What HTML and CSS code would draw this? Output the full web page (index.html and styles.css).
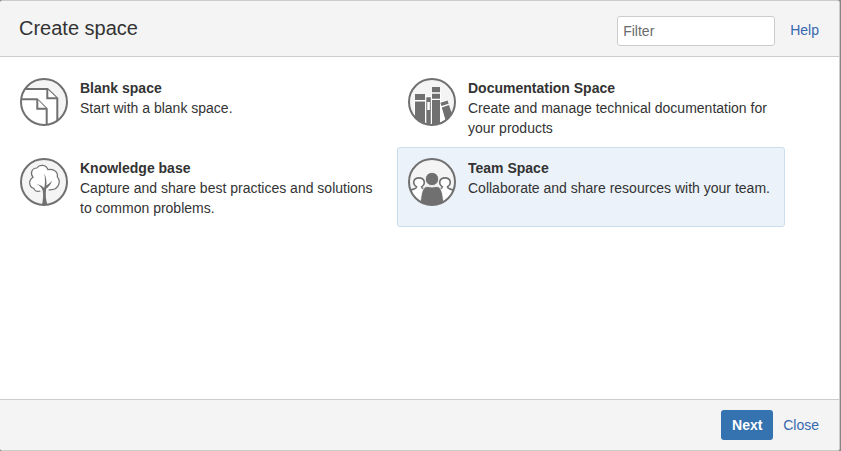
FILE: index.html
```html
<!DOCTYPE html>
<html lang="en">
<head>
<meta charset="utf-8">
<title>Create space</title>
<link rel="stylesheet" href="styles.css">
</head>
<body>
<div class="dialog">
  <header class="dialog-header">
    <h1>Create space</h1>
    <input class="filter" type="text" placeholder="Filter" aria-label="Filter">
    <a class="link" href="#">Help</a>
  </header>
  <main class="templates">
    <div class="template">
      <svg class="icon" viewBox="0 0 48 48">
        <defs><clipPath id="disc"><circle cx="24" cy="24" r="23"/></clipPath></defs>
        <circle class="disc" cx="24" cy="24" r="23"/>
        <g clip-path="url(#disc)" class="line">
          <path d="M0 11H27.5L37.3 20.5V48H0Z"/>
          <path d="M27.3 11V20.3H37"/>
          <path d="M0 21.3H17L26.7 31V49H0Z"/>
          <path d="M17.3 21.3V30.7H26.5"/>
        </g>
        <circle class="ring" cx="24" cy="24" r="23"/>
      </svg>
      <div class="text"><h2>Blank space</h2><p>Start with a blank space.</p></div>
    </div>
    <div class="template">
      <svg class="icon" viewBox="0 0 48 48">
        <circle class="disc" cx="24" cy="24" r="23"/>
        <g clip-path="url(#disc)">
          <path class="white" d="M6 22H18V18H23V14H33V23L39 22L45 39L36 48H6Z"/>
          <path class="solid" d="M7 16h10v6H7zM7 23.5h10V48H7zM24 9h8v5.3h-8zM24 15.7h8v5h-8zM24 22h8v26h-8zM32.4 24.8l7.2-2.3 1 3.2-7.2 2.3zM33.8 29.4l7.2-2.3 5 15-7 5z"/>
          <path class="solid" fill-rule="evenodd" d="M18.3 19.3h4.5V48h-4.5zM19.3 24h2.5v8h-2.5z"/>
        </g>
        <circle class="ring" cx="24" cy="24" r="23"/>
      </svg>
      <div class="text"><h2>Documentation Space</h2><p>Create and manage technical documentation for your products</p></div>
    </div>
    <div class="template">
      <svg class="icon" viewBox="0 0 48 48">
        <circle class="disc" cx="24" cy="24" r="23"/>
        <path class="crown" d="M20 33C17 34 14.5 32.8 13.8 30.3C9.2 29.5 7.8 22.5 13 19.2C9.8 15.5 11.8 10 16.8 10C19.5 6.2 26 6.4 27.8 11.6C34.5 10.2 38.2 14.8 37.3 18.8C41.2 23.5 39 32.5 29 31.8"/>
        <path class="solid" d="M22 47C23 42 23.4 37 22.8 33C22 29.5 19.5 27.7 16.5 26C20 26.8 22.6 28 24.2 30C25.2 26 25.2 20.5 24.4 15.5C26.2 19.5 26.9 24 26.3 27.5C28.2 26.4 30.8 24.5 32 22.5C31.4 26 28.5 29 26.2 30.8C25.4 36 25.7 42 27.5 47Z"/>
        <circle class="ring" cx="24" cy="24" r="23"/>
      </svg>
      <div class="text"><h2>Knowledge base</h2><p>Capture and share best practices and solutions to common problems.</p></div>
    </div>
    <div class="template selected">
      <svg class="icon" viewBox="0 0 48 48">
        <circle class="disc" cx="24" cy="24" r="23"/>
        <g clip-path="url(#disc)">
          <g id="friend">
            <path class="white" d="M0 34C3 31.5 8.5 31.8 8.5 28H13.7C13.7 31.8 17 31 19 32V49H0Z"/>
            <path class="friend" d="M2 32.3C5 31 8.5 31.3 8.5 28.8C4 26 5.2 19.9 11 19.9C16.8 19.9 18 26 13.6 28.8C13.6 30.2 14.5 30.6 16 31"/>
          </g>
          <use href="#friend" transform="matrix(-1 0 0 1 48 0)"/>
          <path class="body" d="M12.2 49C12.6 39 13.5 31 17.5 28.8C19.5 28 21.5 29 24 29C26.5 29 28.5 28 30.5 28.8C34.5 31 35.4 39 35.8 49Z"/>
          <circle class="head" cx="24" cy="21" r="6.6"/>
        </g>
        <circle class="ring" cx="24" cy="24" r="23"/>
      </svg>
      <div class="text"><h2>Team Space</h2><p>Collaborate and share resources with your team.</p></div>
    </div>
  </main>
  <footer class="dialog-footer">
    <button class="next" type="button">Next</button>
    <a class="link" href="#">Close</a>
  </footer>
</div>
</body>
</html>
```
FILE: styles.css
```css
* { box-sizing: border-box; }
body {
  margin: 0;
  background: #858585;
  color: #333;
  font: 14px/20px "Liberation Sans", Arial, sans-serif;
}
.dialog {
  display: flex;
  flex-direction: column;
  width: 840px;
  height: 451px;
  border: 1px solid #ccc;
  border-left: 0;
  border-radius: 3px;
  background: #fff;
  overflow: hidden;
}
.dialog-header {
  display: flex;
  align-items: center;
  height: 56px;
  padding: 4px 20px 0 19px;
  border-bottom: 1px solid #ccc;
  background: #f4f4f4;
}
h1 { flex: 1; margin: 0 0 6px; font-size: 20px; line-height: 28px; font-weight: 400; }
.filter {
  width: 158px;
  height: 30px;
  margin-right: 15px;
  padding: 0 5px;
  border: 1px solid #ccc;
  border-radius: 3px;
  background: #fff;
  font: inherit;
}
.filter::placeholder { color: #6b6b6b; opacity: 1; }
.link { color: #3668b0; text-decoration: none; }
.dialog-header .link { margin-bottom: 1px; }
.templates {
  flex: 1;
  display: grid;
  grid-template-columns: 388px 388px;
  grid-auto-rows: 80px;
  padding: 10px 9px;
}
.template {
  display: flex;
  gap: 12px;
  padding: 10px;
  border: 1px solid transparent;
  border-radius: 3px;
}
.selected { background: #ebf2f9; border-color: #cbdcec; }
.icon { flex: none; width: 48px; height: 48px; }
.text { width: 306px; }
h2, p { margin: 0; font-size: 14px; line-height: 20px; }
.dialog-footer {
  display: flex;
  align-items: center;
  justify-content: flex-end;
  gap: 10px;
  height: 51px;
  padding-right: 20px;
  border-top: 1px solid #ccc;
  background: #f4f4f4;
}
.next {
  width: 52px;
  height: 30px;
  padding: 0;
  border: 0;
  border-radius: 3px;
  background: #3572b0;
  color: #fff;
  font: bold 14px/30px "Liberation Sans", Arial, sans-serif;
}
.disc { fill: #f4f4f4; }
.ring { fill: none; stroke: #707070; stroke-width: 2; }
.line { fill: #fff; stroke: #707070; stroke-width: 2; }
.white { fill: #fff; }
.solid { fill: #707070; }
.crown { fill: #fff; stroke: #707070; stroke-width: 1.2; stroke-linecap: round; }
.friend { fill: #fff; stroke: #707070; stroke-width: 1.6; }
.body { fill: #707070; stroke: #fff; stroke-width: .8; }
.head { fill: #707070; stroke: #f4f4f4; stroke-width: .8; }
```
